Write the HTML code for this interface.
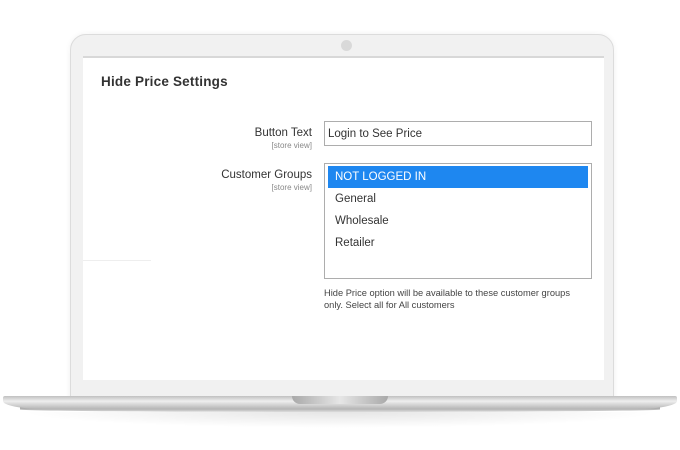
<!DOCTYPE html>
<html><head><style>
*{margin:0;padding:0;box-sizing:border-box}
body{width:680px;height:450px;background:#fff;position:relative;overflow:hidden;font-family:"Liberation Sans",sans-serif;color:#333}
.a{position:absolute}
.lid{left:70px;top:34px;width:544px;height:370px;background:#f1f1f1;border:1px solid #dcdcdc;border-radius:16px 16px 0 0;box-shadow:0 0 6px rgba(0,0,0,.06)}
.scr{left:83px;top:56px;width:521px;height:324px;background:#fff;border-top:2px solid #d8d8d8}
.cam{left:341px;top:40px;width:11px;height:11px;border-radius:50%;background:#d9d9d9}
.base{left:3px;top:396px;width:674px;height:13px;background:linear-gradient(#c0c0c0,#eee 40%,#b5b5b5);border-radius:2px 2px 40px 40px/2px 2px 8px 8px}
.base2{left:20px;top:407px;width:640px;height:5px;background:linear-gradient(#999,#ddd);border-radius:0 0 50% 50%}
.shadow{left:20px;top:412px;width:640px;height:16px;background:radial-gradient(ellipse at top,rgba(0,0,0,.1),rgba(0,0,0,0) 70%)}
.notch{left:292px;top:396px;width:96px;height:8px;background:linear-gradient(90deg,#a9a9a9,#e6e6e6 50%,#a9a9a9);border-radius:0 0 8px 8px}
.lbl{right:368px;text-align:right;font-size:11.5px;color:#333}
.sv{right:368px;text-align:right;font-size:8px;color:#888}
.opt{left:335px;font-size:11.5px;color:#333}
</style></head><body>
<div class="a lid"></div>
<div class="a cam"></div>
<div class="a scr"></div>
<div class="a" style="left:83px;top:260px;width:68px;height:1px;background:#eee"></div>
<div class="a" style="left:101px;top:74px;font-size:13.5px;font-weight:bold;color:#333;letter-spacing:.2px">Hide Price Settings</div>
<div class="a lbl" style="top:127px">Button Text</div>
<div class="a sv" style="top:141px">[store view]</div>
<div class="a lbl" style="top:169px">Customer Groups</div>
<div class="a sv" style="top:183px">[store view]</div>
<div class="a" style="left:324px;top:121px;width:268px;height:25px;border:1px solid #adadad;font-size:11.5px;padding:6px 0 0 3px">Login to See Price</div>
<div class="a" style="left:324px;top:163px;width:268px;height:116px;border:1px solid #adadad"></div>
<div class="a" style="left:328px;top:166px;width:260px;height:22px;background:#1e87f0"></div>
<div class="a opt" style="top:171px;color:#fff">NOT LOGGED IN</div>
<div class="a opt" style="top:193px">General</div>
<div class="a opt" style="top:215px">Wholesale</div>
<div class="a opt" style="top:237px">Retailer</div>
<div class="a" style="left:324px;top:287px;font-size:9.3px;line-height:12px;color:#444">Hide Price option will be available to these customer groups<br>only. Select all for All customers</div>
<div class="a shadow"></div>
<div class="a base2"></div>
<div class="a base"></div>
<div class="a notch"></div>
</body></html>
